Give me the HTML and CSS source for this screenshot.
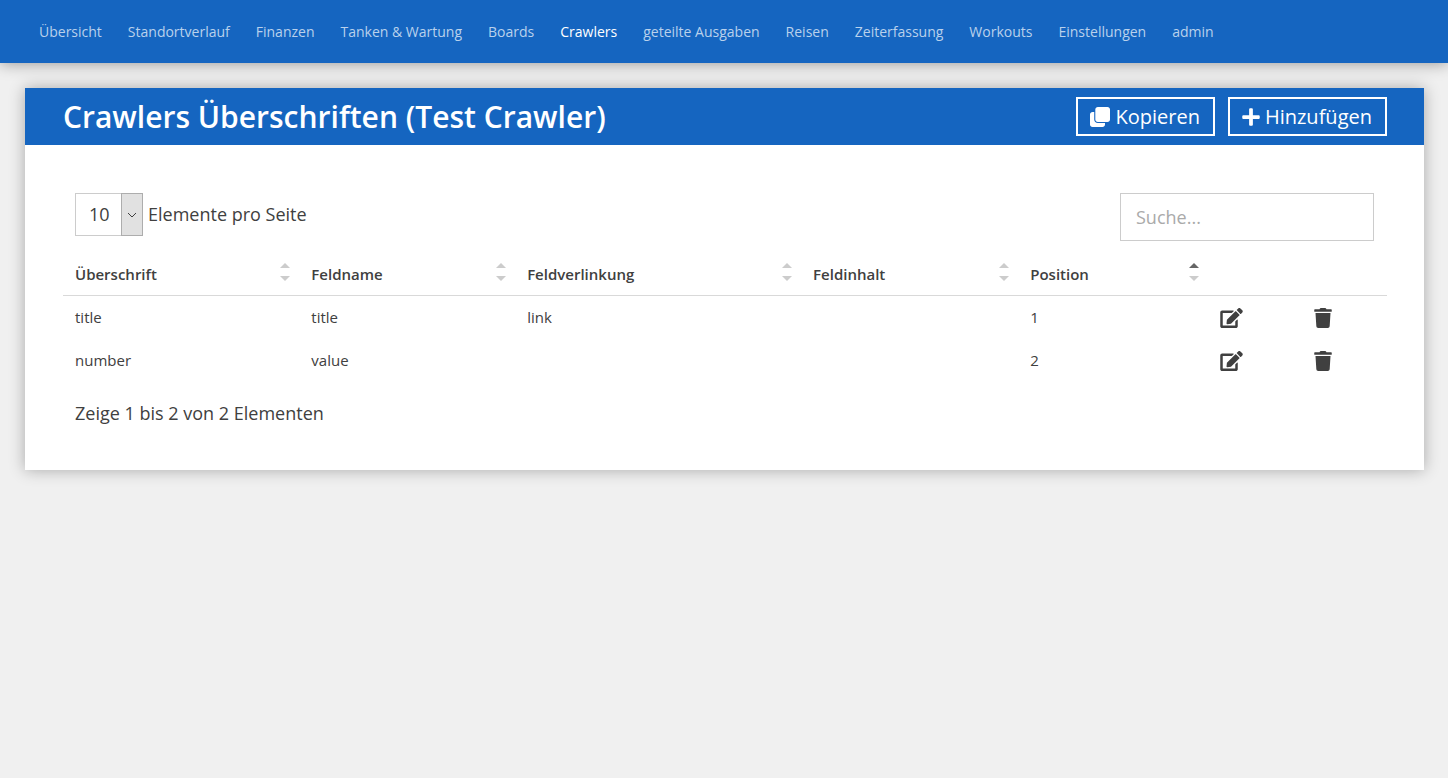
FILE: index.html
```html
<!DOCTYPE html>
<html lang="de">
<head>
<meta charset="utf-8">
<meta name="viewport" content="width=device-width, initial-scale=1">
<title>Crawlers Überschriften</title>
<link rel="stylesheet" href="styles.css">
</head>
<body>
<svg class="sprite" aria-hidden="true">
  <symbol id="clone" viewBox="0 0 512 512"><path d="M200 0h248c35 0 64 29 64 64v256c0 35-29 64-64 64H200c-35 0-64-29-64-64V64c0-35 29-64 64-64zM200 412c-50 0-92-42-92-92V128H64c-35 0-64 29-64 64v256c0 35 29 64 64 64h256c35 0 64-29 64-64v-36z"/></symbol>
  <symbol id="plus" viewBox="0 0 448 512"><path d="M416 208H272V64c0-17.67-14.33-32-32-32h-32c-17.67 0-32 14.33-32 32v144H32c-17.67 0-32 14.33-32 32v32c0 17.67 14.33 32 32 32h144v144c0 17.67 14.33 32 32 32h32c17.67 0 32-14.33 32-32V304h144c17.67 0 32-14.33 32-32v-32c0-17.67-14.33-32-32-32z"/></symbol>
  <symbol id="edit" viewBox="0 0 576 512"><path d="M402.6 83.2l90.2 90.2c3.8 3.8 3.8 10 0 13.8L274.4 405.6l-92.8 10.3c-12.4 1.4-22.9-9.1-21.5-21.5l10.3-92.8L388.8 83.2c3.8-3.8 10-3.8 13.8 0zm162-22.9l-48.8-48.8c-15.2-15.2-39.9-15.2-55.2 0l-35.4 35.4c-3.8 3.8-3.8 10 0 13.8l90.2 90.2c3.8 3.8 10 3.8 13.8 0l35.4-35.4c15.2-15.3 15.2-40 0-55.2zM384 346.2V448H64V128h229.8c3.2 0 6.2-1.3 8.5-3.5l40-40c7.6-7.6 2.2-20.5-8.5-20.5H48C21.5 64 0 85.5 0 112v352c0 26.5 21.5 48 48 48h352c26.5 0 48-21.5 48-48V306.2c0-10.7-12.9-16-20.5-8.5l-40 40c-2.2 2.3-3.5 5.3-3.5 8.5z"/></symbol>
  <symbol id="trash" viewBox="0 0 448 512"><path d="M432 32H312l-9.4-18.7A24 24 0 0 0 281.1 0H166.8a23.72 23.72 0 0 0-21.4 13.3L136 32H16A16 16 0 0 0 0 48v32a16 16 0 0 0 16 16h416a16 16 0 0 0 16-16V48a16 16 0 0 0-16-16zM53.2 467a48 48 0 0 0 47.9 45h245.8a48 48 0 0 0 47.9-45L416 128H32z"/></symbol>
  <symbol id="sort" viewBox="0 0 10 18"><path class="sort-up" d="M0 5L5 0L10 5z"/><path class="sort-down" d="M0 13L5 18L10 13z"/></symbol>
</svg>
<nav class="navbar">
  <a href="#">Übersicht</a>
  <a href="#">Standortverlauf</a>
  <a href="#">Finanzen</a>
  <a href="#">Tanken &amp; Wartung</a>
  <a href="#">Boards</a>
  <a href="#" class="active" aria-current="page">Crawlers</a>
  <a href="#">geteilte Ausgaben</a>
  <a href="#">Reisen</a>
  <a href="#">Zeiterfassung</a>
  <a href="#">Workouts</a>
  <a href="#">Einstellungen</a>
  <a href="#">admin</a>
</nav>
<main class="card">
  <header class="card-header">
    <h1>Crawlers Überschriften (Test Crawler)</h1>
    <div class="actions">
      <a class="btn" href="#"><svg class="icon-clone"><use href="#clone"/></svg>Kopieren</a>
      <a class="btn" href="#"><svg class="icon-plus"><use href="#plus"/></svg>Hinzufügen</a>
    </div>
  </header>
  <div class="card-body">
    <div class="toolbar">
      <div class="page-size">
        <span class="select-box">
          <select id="page-size"><option>10</option><option>25</option></select>
          <span class="select-arrow"><svg viewBox="0 0 10 6"><path d="M1 1L5 5L9 1"/></svg></span>
        </span>
        <label for="page-size">Elemente pro Seite</label>
      </div>
      <input class="search" type="text" placeholder="Suche..." aria-label="Suche">
    </div>
    <table class="data">
      <colgroup><col class="c-title"><col class="c-field"><col class="c-link"><col class="c-content"><col class="c-position"><col class="c-edit"><col class="c-delete"></colgroup>
      <thead>
        <tr>
          <th><div class="head">Überschrift<svg class="sort"><use href="#sort"/></svg></div></th>
          <th><div class="head">Feldname<svg class="sort"><use href="#sort"/></svg></div></th>
          <th><div class="head">Feldverlinkung<svg class="sort"><use href="#sort"/></svg></div></th>
          <th><div class="head">Feldinhalt<svg class="sort"><use href="#sort"/></svg></div></th>
          <th aria-sort="ascending"><div class="head">Position<svg class="sort ascending"><use href="#sort"/></svg></div></th>
          <th></th>
          <th></th>
        </tr>
      </thead>
      <tbody>
        <tr>
          <td>title</td><td>title</td><td>link</td><td></td><td>1</td>
          <td><a href="#" aria-label="Bearbeiten"><svg class="icon-edit"><use href="#edit"/></svg></a></td>
          <td><a href="#" aria-label="Löschen"><svg class="icon-trash"><use href="#trash"/></svg></a></td>
        </tr>
        <tr>
          <td>number</td><td>value</td><td></td><td></td><td>2</td>
          <td><a href="#" aria-label="Bearbeiten"><svg class="icon-edit"><use href="#edit"/></svg></a></td>
          <td><a href="#" aria-label="Löschen"><svg class="icon-trash"><use href="#trash"/></svg></a></td>
        </tr>
      </tbody>
    </table>
    <p class="info">Zeige 1 bis 2 von 2 Elementen</p>
  </div>
</main>
</body>
</html>
```
FILE: styles.css
```css
* { box-sizing: border-box; }

body {
  margin: 0;
  background: #f0f0f0;
  color: #404040;
  font: 18px/27px "Open Sans", sans-serif;
}

.sprite { display: none; }
svg { fill: currentColor; }
a { color: inherit; text-decoration: none; }

.navbar {
  display: flex;
  flex-wrap: wrap;
  column-gap: 26px;
  padding: 20px 39px;
  background: #1565c0;
  box-shadow: 0 0 15px rgba(0, 0, 0, 0.4);
  color: #b9d1ec;
  font-size: 14px;
  line-height: 23px;
}
.navbar .active { color: #fff; }

.card {
  margin: 25px 24px 25px 25px;
  background: #fff;
  box-shadow: 0 0 15px rgba(0, 0, 0, 0.3);
}
.card-header {
  display: flex;
  flex-wrap: wrap;
  align-items: center;
  justify-content: space-between;
  padding: 9px 37px 9px 38px;
  background: #1565c0;
  color: #fff;
}
h1 {
  margin: 0;
  font-size: 30px;
  font-weight: 600;
  line-height: 39px;
}
.actions { display: flex; gap: 13px; }
.btn {
  display: flex;
  align-items: center;
  gap: 5px;
  padding: 0 13px 0 12px;
  border: 2px solid #fff;
  font-size: 20px;
  line-height: 35px;
}
.icon-clone { width: 20px; height: 20px; }
.icon-plus { width: 18px; height: 20px; }

.card-body { padding: 48px 37px 43px 38px; }
.toolbar {
  display: flex;
  flex-wrap: wrap;
  align-items: flex-start;
  justify-content: space-between;
  padding: 0 13px 0 12px;
}
.page-size { display: flex; align-items: center; gap: 5px; }
.select-box {
  display: grid;
  grid-template-columns: 46px 22px;
  height: 43px;
}
.select-box select {
  grid-area: 1 / 1 / 2 / 3;
  appearance: none;
  padding: 0 13px;
  border: 1px solid #ccc;
  border-radius: 0;
  background: #fff;
  color: inherit;
  font: inherit;
}
.select-arrow {
  grid-area: 1 / 2;
  display: grid;
  place-items: center;
  border: 1px solid #adadad;
  background: #e1e1e1;
  pointer-events: none;
  z-index: 1;
}
.select-arrow svg {
  width: 10px;
  height: 6px;
  fill: none;
  stroke: #404040;
}
.search {
  width: 254px;
  height: 48px;
  padding: 0 15px;
  border: 1px solid #ccc;
  color: inherit;
  font: inherit;
}
.search::placeholder { color: #aaa; opacity: 1; }

.data {
  width: 100%;
  margin-top: 12px;
  table-layout: fixed;
  border-collapse: collapse;
  font-size: 15px;
  line-height: 23px;
}
.c-title { width: 17.85%; }
.c-field { width: 16.3%; }
.c-link { width: 21.6%; }
.c-content { width: 16.4%; }
.c-position { width: 14.3%; }
.c-edit { width: 7.15%; }
.c-delete { width: 6.4%; }
.data th, .data td { padding: 10px 12px; text-align: left; }
.data th { padding-bottom: 9px; border-bottom: 1px solid #d9d9d9; font-weight: 600; }
.head { display: flex; justify-content: space-between; }
.sort {
  width: 10px;
  height: 18px;
  margin-right: -3px;
  --up: #ccc;
}
.ascending { --up: #666; }
.sort-up { fill: var(--up); }
.sort-down { fill: #ccc; }
.data td a { display: flex; }
.icon-edit { width: 23px; height: 20px; }
.icon-trash { width: 18px; height: 20px; }

.info { margin: 18px 12px 0; }
```
